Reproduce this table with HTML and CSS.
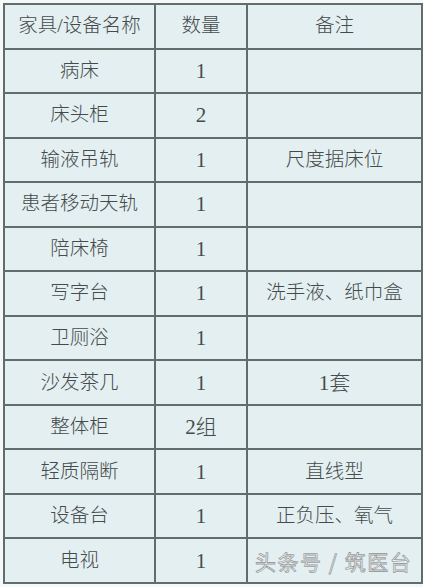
FILE: index.html
```html
<!DOCTYPE html>
<html lang="zh">
<head>
<meta charset="utf-8">
<link rel="stylesheet" href="styles.css">
</head>
<body>
<div class="wrap">
<table class="tbl">
<colgroup><col class="c1"><col class="c2"><col class="c3"></colgroup>
<tr><td>家具/设备名称</td><td>数量</td><td>备注</td></tr>
<tr><td>病床</td><td class="num">1</td><td></td></tr>
<tr><td>床头柜</td><td class="num">2</td><td></td></tr>
<tr><td>输液吊轨</td><td class="num">1</td><td>尺度据床位</td></tr>
<tr><td>患者移动天轨</td><td class="num">1</td><td></td></tr>
<tr><td>陪床椅</td><td class="num">1</td><td></td></tr>
<tr><td>写字台</td><td class="num">1</td><td>洗手液、纸巾盒</td></tr>
<tr><td>卫厕浴</td><td class="num">1</td><td></td></tr>
<tr><td>沙发茶几</td><td class="num">1</td><td class="num">1套</td></tr>
<tr><td>整体柜</td><td class="num">2组</td><td></td></tr>
<tr><td>轻质隔断</td><td class="num">1</td><td>直线型</td></tr>
<tr><td>设备台</td><td class="num">1</td><td>正负压、氧气</td></tr>
<tr><td>电视</td><td class="num">1</td><td></td></tr>
</table>
<div class="mark">头条号 / 筑医台</div>
</div>
</body>
</html>
```
FILE: styles.css
```css
html, body {
  margin: 0;
  padding: 0;
  background: #f4f8f8;
}
.wrap {
  position: relative;
  width: 423px;
  height: 587px;
  padding: 3px 0 0 3px;
  box-sizing: border-box;
}
.tbl {
  border-collapse: collapse;
  width: 418px;
  height: 581px;
  table-layout: fixed;
  background: #e4eff2;
  font-family: "Liberation Serif", "Noto Sans CJK SC", serif;
  font-size: 19.5px;
  line-height: 24px;
  color: #444b4a;
}
.c1 { width: 151px; }
.c2 { width: 92px; }
.c3 { width: 175px; }
.tbl td {
  border: 2px solid #626c6a;
  text-align: center;
  vertical-align: middle;
  padding: 0;
  font-weight: 300;
}
.num {
  font-family: "Liberation Serif", "Noto Sans CJK SC", serif;
  font-size: 21px;
}
.mark {
  position: absolute;
  left: 255px;
  top: 546px;
  font-family: "Noto Sans CJK SC", sans-serif;
  font-size: 21px;
  color: #f6f8f8;
  -webkit-text-stroke: 0.8px #9aa09f;
  letter-spacing: 1.5px;
}
```
